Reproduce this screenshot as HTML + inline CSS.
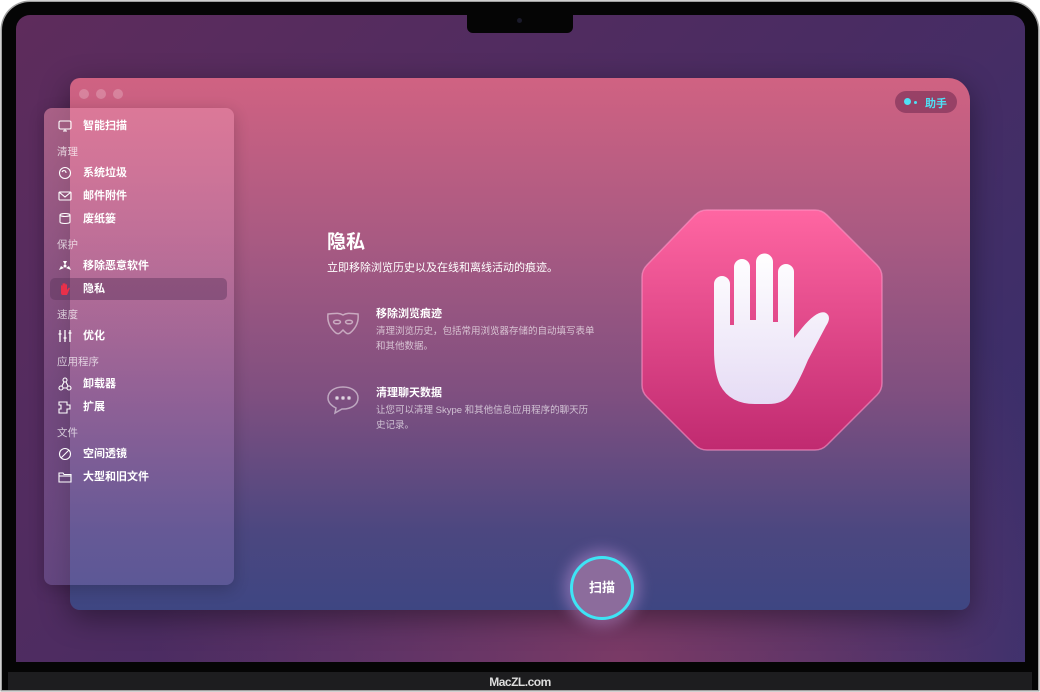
<!DOCTYPE html>
<html><head><meta charset="utf-8"><style>
*{margin:0;padding:0;box-sizing:border-box}
body{width:1040px;height:690px;overflow:hidden;background:#fff;font-family:"Liberation Sans","Noto Sans CJK SC",sans-serif;position:relative}
.bezel{position:absolute;left:2px;top:2px;width:1036px;height:688px;background:#050505;border-radius:28px 28px 0 0;box-shadow:0 0 0 1.5px #a0a0a0}
.screen{position:absolute;left:16px;top:15px;width:1009px;height:647px;border-radius:14px 14px 0 0;overflow:hidden;
background:radial-gradient(ellipse at 60% 100%,#7a3a66 0%,rgba(0,0,0,0) 55%),linear-gradient(135deg,#5e2c5c 0%,#4a2c62 50%,#36306e 100%)}
.notch{position:absolute;left:467px;top:15px;width:106px;height:18px;background:#050505;border-radius:0 0 6px 6px}
.cam{position:absolute;left:517px;top:18px;width:5px;height:5px;border-radius:50%;background:#1a1a2a}
.bottom{position:absolute;left:8px;top:672px;width:1024px;height:18px;background:#1d1d1f;color:#ddd;font-size:12px;text-align:center;line-height:20px;font-weight:bold;letter-spacing:-0.5px}
.win{position:absolute;left:70px;top:78px;width:900px;height:532px;border-radius:10px 22px 10px 10px;
background:linear-gradient(180deg,#d06282 0%,#a95a82 30%,#7e4f80 60%,#4c4780 85%,#3e4682 100%);box-shadow:0 8px 30px rgba(0,0,0,.4)}
.dot{position:absolute;top:89px;width:10px;height:10px;border-radius:50%;background:rgba(255,255,255,.22)}
.side{position:absolute;left:44px;top:108px;width:190px;height:477px;border-radius:8px;background:linear-gradient(180deg,rgba(235,140,170,.55),rgba(180,130,190,.35) 60%,rgba(140,120,190,.35));box-shadow:0 4px 16px rgba(0,0,0,.2)}
.it{position:absolute;left:83px;font-size:11px;color:#fff;font-weight:bold;line-height:14px}
.hd{position:absolute;left:57px;font-size:10.5px;color:rgba(255,255,255,.7);line-height:14px}
.ic{position:absolute;left:58px;width:14px;height:14px}
.sel{position:absolute;left:50px;top:278px;width:177px;height:22px;border-radius:5px;background:rgba(90,50,90,.45)}
.t1{position:absolute;left:327px;top:227px;font-size:19px;font-weight:bold;color:#fff}
.t2{position:absolute;left:327px;top:259px;font-size:11px;color:#fff}
.ft{position:absolute;left:376px;font-size:11px;color:#fff;font-weight:bold}
.fd{position:absolute;left:376px;font-size:9.5px;color:rgba(255,255,255,.65);line-height:15px;width:240px}
.help{position:absolute;left:895px;top:91px;width:62px;height:22px;border-radius:11px;background:rgba(110,40,80,.55);color:#4fe0f5;font-size:11px;font-weight:bold}
.scan{position:absolute;left:570px;top:556px;width:64px;height:64px;border-radius:50%;border:3px solid #3ee4f5;background:#8c6c9c;box-shadow:0 0 14px 6px rgba(200,150,220,.45);color:#fff;font-size:13px;font-weight:bold;text-align:center;line-height:58px}
</style></head><body>
<div class="bezel"></div>
<div class="screen"></div>
<div class="notch"></div><div class="cam"></div>
<div class="bottom">MacZL.com</div>
<div class="win"></div>
<div class="dot" style="left:79px"></div><div class="dot" style="left:96px"></div><div class="dot" style="left:113px"></div>
<div class="help"><span style="position:absolute;left:9px;top:7px;width:7px;height:7px;border-radius:50%;background:#4fe0f5"></span><span style="position:absolute;left:19px;top:10px;width:3px;height:3px;border-radius:50%;background:#4fe0f5"></span><span style="position:absolute;left:30px;top:4px">助手</span></div>
<div class="side"></div>
<div class="sel"></div>
<svg class="ic" style="top:119px" viewBox="0 0 14 14" fill="none" stroke="#fff" stroke-width="1.1"><rect x="1" y="2" width="12" height="8" rx="1.5"/><path d="M5 12h4M7 10v2"/></svg>
<div class="it" style="top:119px">智能扫描</div>
<div class="hd" style="top:145px">清理</div>
<svg class="ic" style="top:166px" viewBox="0 0 14 14" fill="none" stroke="#fff" stroke-width="1.1"><circle cx="7" cy="7" r="5.5"/><path d="M4 6c1-2 4-2 4 1"/></svg>
<div class="it" style="top:166px">系统垃圾</div>
<svg class="ic" style="top:189px" viewBox="0 0 14 14" fill="none" stroke="#fff" stroke-width="1.1"><rect x="1" y="3" width="12" height="8" rx="1"/><path d="M1 3l6 5 6-5"/></svg>
<div class="it" style="top:189px">邮件附件</div>
<svg class="ic" style="top:212px" viewBox="0 0 14 14" fill="none" stroke="#fff" stroke-width="1.1"><ellipse cx="7" cy="3" rx="5" ry="1.5"/><path d="M2 3v7c0 2 10 2 10 0V3"/></svg>
<div class="it" style="top:212px">废纸篓</div>
<div class="hd" style="top:238px">保护</div>
<svg class="ic" style="top:259px" viewBox="0 0 14 14" fill="#fff"><circle cx="7" cy="7" r="1.5"/><path d="M5 2h4L7 6zM1 11l2-4 3 2zM13 11l-2-4-3 2z"/></svg>
<div class="it" style="top:259px">移除恶意软件</div>
<svg class="ic" style="top:282px" viewBox="0 0 14 14"><path d="M3 6V4c0-1 1.5-1 1.5 0V2c0-1 1.5-1 1.5 0v0c0-1 1.5-1 1.5 0v1c0-1 1.5-1 1.5 0v5l1.5-2c.8-.8 1.8 0 1.2.8L9 13H5c-1.5 0-2-1-2-2.5z" fill="#e8304a"/></svg>
<div class="it" style="top:282px">隐私</div>
<div class="hd" style="top:308px">速度</div>
<svg class="ic" style="top:329px" viewBox="0 0 14 14" stroke="#fff" stroke-width="1.3"><path d="M2 1v12M7 1v12M12 1v12M0.5 5h3M5.5 9h3M10.5 4h3"/></svg>
<div class="it" style="top:329px">优化</div>
<div class="hd" style="top:355px">应用程序</div>
<svg class="ic" style="top:377px" viewBox="0 0 14 14" fill="none" stroke="#fff" stroke-width="1.1"><circle cx="7" cy="3" r="2"/><circle cx="3" cy="11" r="2"/><circle cx="11" cy="11" r="2"/><path d="M6 5l-2 4M8 5l2 4M5 11h4"/></svg>
<div class="it" style="top:377px">卸载器</div>
<svg class="ic" style="top:400px" viewBox="0 0 14 14" fill="none" stroke="#fff" stroke-width="1.1"><path d="M1 2h8v3h3v4H9v4H1V9h2V5H1z"/></svg>
<div class="it" style="top:400px">扩展</div>
<div class="hd" style="top:426px">文件</div>
<svg class="ic" style="top:447px" viewBox="0 0 14 14" fill="none" stroke="#fff" stroke-width="1.1"><circle cx="7" cy="7" r="5.5"/><path d="M3 11L11 3"/></svg>
<div class="it" style="top:447px">空间透镜</div>
<svg class="ic" style="top:470px" viewBox="0 0 14 14" fill="none" stroke="#fff" stroke-width="1.1"><path d="M1 3h4l1 1.5h7V12H1z"/><path d="M1 6h12"/></svg>
<div class="it" style="top:470px">大型和旧文件</div>

<div class="t1">隐私</div>
<div class="t2">立即移除浏览历史以及在线和离线活动的痕迹。</div>
<svg style="position:absolute;left:326px;top:310px" width="34" height="28" viewBox="0 0 34 28" fill="none" stroke="rgba(255,255,255,.5)" stroke-width="1.5"><path d="M2 4c5 0 10-2 15 1 5-3 10-1 15-1 1 8-2 14-8 19-3 2-5-1-7-3-2 2-4 5-7 3C4 18 1 12 2 4z"/><ellipse cx="11" cy="12" rx="3.5" ry="1.8"/><ellipse cx="23" cy="12" rx="3.5" ry="1.8"/></svg>
<div class="ft" style="top:305px">移除浏览痕迹</div>
<div class="fd" style="top:324px">清理浏览历史，包括常用浏览器存储的自动填写表单<br>和其他数据。</div>
<svg style="position:absolute;left:326px;top:385px" width="34" height="30" viewBox="0 0 34 30" fill="none" stroke="rgba(255,255,255,.5)" stroke-width="1.5"><path d="M17 2C9 2 2 6 2 13c0 5 4 8 8 10l-1 5 7-4h1c8 0 15-4 15-11S25 2 17 2z"/><circle cx="11" cy="13" r="1.2" fill="rgba(255,255,255,.6)"/><circle cx="17" cy="13" r="1.2" fill="rgba(255,255,255,.6)"/><circle cx="23" cy="13" r="1.2" fill="rgba(255,255,255,.6)"/></svg>
<div class="ft" style="top:384px">清理聊天数据</div>
<div class="fd" style="top:403px">让您可以清理 Skype 和其他信息应用程序的聊天历<br>史记录。</div>

<svg style="position:absolute;left:638px;top:205px" width="250" height="250" viewBox="638 205 250 250">
<defs><linearGradient id="g" x1="0" y1="0" x2="0" y2="1"><stop offset="0" stop-color="#ff66a2"/><stop offset="1" stop-color="#c02a70"/></linearGradient>
<linearGradient id="h" x1="0" y1="0" x2="0" y2="1"><stop offset="0" stop-color="#fff"/><stop offset="1" stop-color="#e6dcf5"/></linearGradient></defs>
<path d="M707 210L815 210Q822 210 827 215L877 265Q882 270 882 277L882 383Q882 390 877 395L827 445Q822 450 815 450L707 450Q700 450 695 445L647 397Q642 392 642 385L642 277Q642 270 647 265L695 215Q700 210 707 210Z" fill="url(#g)" stroke="rgba(255,150,200,.6)" stroke-width="1.5"/>
<path d="M714 284A8 8 0 0 1 730 284L730 325L734 325L734 267A8 8 0 0 1 750 267L750 320L756 320L756 262A8.5 8.5 0 0 1 773 262L773 322L778 322L778 272A8 8 0 0 1 794 272L794 338L802 328Q818 309 826 313Q832 317 826 326L808 360Q798 384 790 395Q783 404 768 404L755 404Q730 404 720 385Q714 372 714 350Z" fill="url(#h)"/>
</svg>

<div class="scan">扫描</div>
</body></html>
